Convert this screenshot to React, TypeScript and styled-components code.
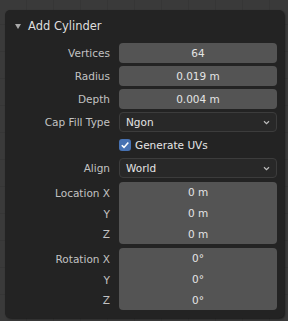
import React from "react";
import styled, {createGlobalStyle} from "styled-components";

const GlobalStyle = createGlobalStyle`
html, body {
    margin: 0;
    padding: 0;
}
body {
    width: 288px;
    height: 321px;
    overflow: hidden;
    background-color: #3a3a3a;
    background-image:
        repeating-linear-gradient(90deg, transparent 0 26px, #363636 26px 27px),
        repeating-linear-gradient(0deg, transparent 0 26px, #363636 26px 27px);
    font-family: "DejaVu Sans", "Liberation Sans", sans-serif;
}
`

const Viewport = styled.div`
padding: 10px 4px 0 5px;
`

const Panel = styled.div`
background: #232323;
border-radius: 5px;
height: 308px;
box-sizing: border-box;
padding: 0 7px 8px 8px;
box-shadow: 1px 1px 2px rgba(0, 0, 0, 0.55);
`

const Header = styled.div`
display: flex;
align-items: center;
height: 33px;
padding-bottom: 1px;
box-sizing: border-box;
color: #dedede;
font-size: 11.5px;
`

const Triangle = styled.span`
width: 0;
height: 0;
margin: 1px 7px 0 2px;
border-left: 3px solid transparent;
border-right: 3px solid transparent;
border-top: 5px solid #a8a8a8;
`

const Form = styled.div`
display: flex;
flex-direction: column;
gap: 3px;
`

const Group = styled.div<{ top?: number }>`
display: flex;
flex-direction: column;
margin-top: ${({top}) => top || 0}px;
`

const Row = styled.div`
display: grid;
grid-template-columns: 1fr 158px;
column-gap: 9px;
align-items: center;
height: 20px;
`

const Label = styled.div`
text-align: right;
color: #c2c2c2;
font-size: 10.5px;
white-space: nowrap;
`

const NumField = styled.div<{ pos: 'single' | 'first' | 'mid' | 'last' }>`
height: 100%;
display: flex;
align-items: center;
justify-content: center;
background: #545454;
color: #e4e4e4;
font-size: 10.5px;
border-radius: ${({pos}) =>
    pos === 'single' ? '4px' : pos === 'first' ? '4px 4px 0 0' : pos === 'last' ? '0 0 4px 4px' : '0'};
border-bottom: ${({pos}) => pos === 'first' || pos === 'mid' ? '1px solid #3e3e3e' : 'none'};
`

const Select = styled.div`
height: 100%;
box-sizing: border-box;
display: flex;
align-items: center;
justify-content: space-between;
padding: 0 6px 0 6px;
background: #282828;
border: 1px solid #3c3c3c;
border-radius: 4px;
color: #e4e4e4;
font-size: 10.5px;
`

const Check = styled.label`
display: flex;
align-items: center;
gap: 4px;
color: #e6e6e6;
font-size: 10.5px;
`

const Box = styled.span`
width: 12px;
height: 12px;
border-radius: 3px;
background: #4772b3;
display: flex;
align-items: center;
justify-content: center;
`

const Chevron = () => (
    <svg width="7" height="5" viewBox="0 0 7 5">
        <path d="M1 1.2 L3.5 3.6 L6 1.2" fill="none" stroke="#bdbdbd" strokeWidth="1.2"/>
    </svg>
)

const Tick = () => (
    <svg width="10" height="10" viewBox="0 0 10 10">
        <path d="M1.8 5.2 L4 7.4 L8.3 2.4" fill="none" stroke="#ffffff" strokeWidth="1.6"/>
    </svg>
)

const vectorRows = (title: string, values: string[]) =>
    ['X', 'Y', 'Z'].map((axis, key) => (
        <Row key={axis} style={{height: key < 2 ? 21 : 20}}>
            <Label>{key === 0 ? `${title} X` : axis}</Label>
            <NumField pos={key === 0 ? 'first' : key === 2 ? 'last' : 'mid'}>{values[key]}</NumField>
        </Row>
    ))

const App = () => {
    return <Viewport>
        <GlobalStyle/>
        <Panel>
            <Header><Triangle/>Add Cylinder</Header>
            <Form>
                <Row><Label>Vertices</Label><NumField pos="single">64</NumField></Row>
                <Row><Label>Radius</Label><NumField pos="single">0.019 m</NumField></Row>
                <Row><Label>Depth</Label><NumField pos="single">0.004 m</NumField></Row>
                <Row><Label>Cap Fill Type</Label><Select>Ngon<Chevron/></Select></Row>
                <Row>
                    <span/>
                    <Check><Box><Tick/></Box>Generate UVs</Check>
                </Row>
                <Row><Label>Align</Label><Select>World<Chevron/></Select></Row>
                <Group top={1}>{vectorRows('Location', ['0 m', '0 m', '0 m'])}</Group>
                <Group top={1}>{vectorRows('Rotation', ['0°', '0°', '0°'])}</Group>
            </Form>
        </Panel>
    </Viewport>
}

export default App
